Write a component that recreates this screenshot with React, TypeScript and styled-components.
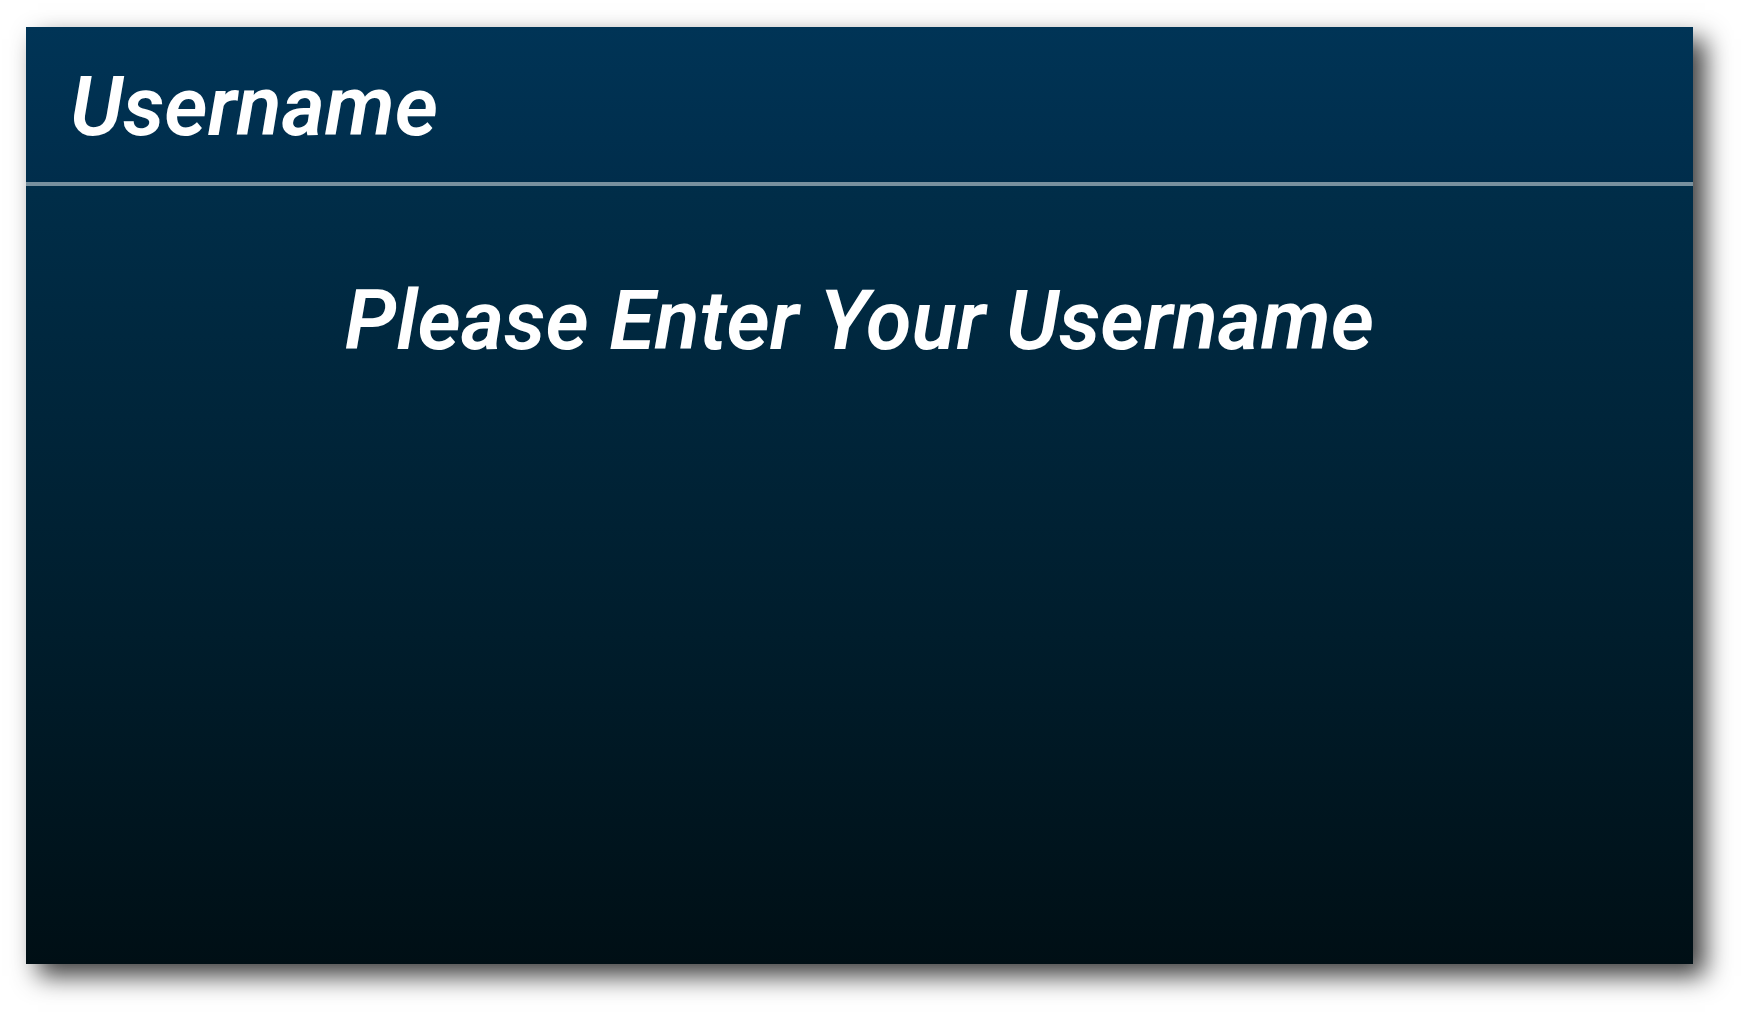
import React from "react";
import styled, { createGlobalStyle } from "styled-components";

const GlobalStyle = createGlobalStyle`
  *, *::before, *::after {
    box-sizing: border-box;
  }
  body {
    margin: 0;
    background: #ffffff;
    font-family: Roboto, "Liberation Sans", sans-serif;
  }
`;

const Page = styled.div`
  display: flex;
  min-height: 100vh;
  padding: 27px 53px 53px 26px;
`;

const Screen = styled.main`
  display: flex;
  flex: 1;
  flex-direction: column;
  color: #ffffff;
  background: linear-gradient(#003456 0%, #002d48 18%, #001d2c 65%, #000f15 100%);
  box-shadow: 12px 12px 24px rgba(0, 0, 0, 0.76);
`;

const Header = styled.header`
  padding: 32px 44px 27px;
  border-bottom: 4px solid #78909e;
  background: linear-gradient(#003456, #002d4b);
`;

const Title = styled.h1`
  margin: 0;
  font-size: 83px;
  font-style: italic;
  font-weight: 600;
  line-height: 96px;
`;

const Content = styled.section`
  flex: 1;
  padding: 87px 44px;
`;

const Prompt = styled.p`
  margin: 0;
  font-size: 83px;
  font-style: italic;
  font-weight: 600;
  line-height: 96px;
  text-align: center;
`;

export default function App() {
  return (
    <>
      <GlobalStyle />
      <Page>
        <Screen>
          <Header>
            <Title>Username</Title>
          </Header>
          <Content>
            <Prompt>Please Enter Your Username</Prompt>
          </Content>
        </Screen>
      </Page>
    </>
  );
}
